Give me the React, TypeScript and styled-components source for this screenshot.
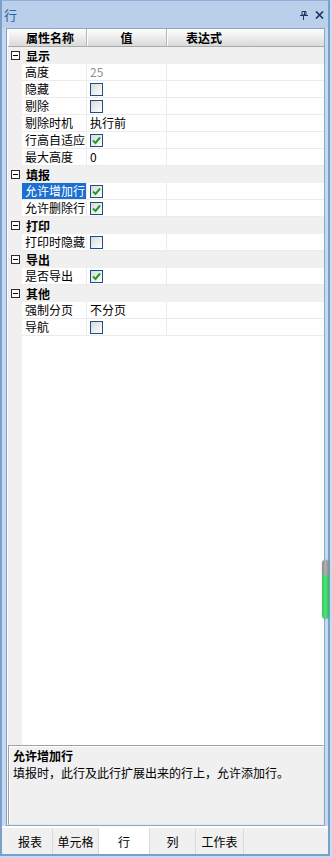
import React from "react";
import styled, { createGlobalStyle, css } from "styled-components";

const Global = createGlobalStyle`
  html, body { margin: 0; padding: 0; background: #c9dbef; }
  body { font-family: "Noto Sans CJK SC", "Noto Sans", sans-serif; font-size: 12px; color: #000; }
  * { box-sizing: border-box; }
`;

const Window = styled.div`
  position: relative;
  width: 330px;
  height: 856px;
  border: 2px solid #7b9fcd;
  border-top: 1px solid #8fb0da;
  background: #c6d9ef;
  display: flex;
  flex-direction: column;
`;

const TitleBar = styled.div`
  height: 27px;
  display: flex;
  align-items: center;
  padding: 0 4px 0 2px;
  background: #bad0ea;
`;

const Title = styled.div`
  flex: 1;
  font-size: 13px;
  line-height: 14px;
  color: #2d5ea6;
`;

const TitleButtons = styled.div`
  display: flex;
  align-items: center;
  gap: 7px;
  padding-top: 1px;
`;

const Panel = styled.div`
  flex: 1;
  margin: 0 3px 0 4px;
  border: 1px solid #8aa6cb;
  border-left-color: #7d9cc6;
  padding-left: 1px;
  background: #ffffff;
  display: flex;
  flex-direction: column;
  min-height: 0;
`;

const Grid = styled.div`
  flex: 1;
  display: flex;
  flex-direction: column;
  min-height: 0;
`;

const Header = styled.div`
  display: grid;
  grid-template-columns: 79px 80px 1fr;
  height: 18px;
  border-bottom: 1px solid #a9a9a9;
  background: linear-gradient(#fefefe, #dadada);
`;

const HeadCell = styled.div<{ $align?: string; $pad?: number }>`
  font-weight: bold;
  font-size: 12px;
  line-height: 17px;
  text-align: ${(p) => p.$align || "left"};
  padding-left: ${(p) => p.$pad ?? 0}px;
  border-right: 1px solid #b5b5b5;
  box-shadow: inset 1px 0 0 #ffffff;
  white-space: nowrap;
  &:last-child { border-right: none; }
`;

const Body = styled.div`
  flex: 1;
  background: linear-gradient(to right, #f0f0f0 14px, #ffffff 14px);
`;

const CategoryRow = styled.div`
  height: 17px;
  display: flex;
  align-items: center;
  background: #f0f0f0;
`;

const Expander = styled.div`
  position: relative;
  width: 9px;
  height: 9px;
  margin-left: 3px;
  margin-right: 6px;
  border: 1px solid #2a2a2a;
  background: #fff;
  &::after {
    content: "";
    position: absolute;
    left: 1px;
    right: 1px;
    top: 3px;
    height: 1px;
    background: #000;
  }
`;

const CategoryTitle = styled.div`
  font-weight: bold;
  font-size: 12px;
  line-height: 16px;
`;

const PropRow = styled.div`
  display: grid;
  grid-template-columns: 14px 65px 80px 1fr;
  height: 17px;
`;

const Margin = styled.div`
  background: #f0f0f0;
`;

const cellBase = css`
  border-bottom: 1px solid #ebebeb;
  font-size: 12px;
  line-height: 16px;
  white-space: nowrap;
  overflow: hidden;
  display: flex;
  align-items: center;
`;

const NameCell = styled.div<{ $selected?: boolean }>`
  ${cellBase}
  padding-left: 3px;
  border-right: 1px solid #ebebeb;
  background: ${(p) => (p.$selected ? "#1a6fd0" : "#ffffff")};
  color: ${(p) => (p.$selected ? "#ffffff" : "#000000")};
`;

const ValueCell = styled.div<{ $disabled?: boolean }>`
  ${cellBase}
  padding-left: 3px;
  border-right: 1px solid #ebebeb;
  color: ${(p) => (p.$disabled ? "#8a929c" : "#000")};
`;

const ExprCell = styled.div`
  ${cellBase}
`;

const CheckBox = styled.div`
  width: 13px;
  height: 13px;
  border: 1px solid #1d4f84;
  background: linear-gradient(135deg, #d9d9d9, #ffffff);
  display: flex;
  align-items: center;
  justify-content: center;
`;

const Description = styled.div`
  height: 80px;
  border: 1px solid #a0a0a0;
  box-shadow: inset 1px 1px 0 #ffffff;
  border-right-color: #e8e8e8;
  border-bottom-color: #e8e8e8;
  background: #f0f0f0;
  padding: 1px 4px;
`;

const DescTitle = styled.div`
  font-weight: bold;
  font-size: 12px;
  line-height: 17px;
`;

const DescText = styled.div`
  font-size: 12px;
  line-height: 17px;
`;

const TabStrip = styled.div`
  height: 28px;
  display: flex;
  align-items: flex-end;
  padding-left: 6px;
  background: #f0f0f0;
  border-top: 2px solid #ffffff;
`;

const Tab = styled.div<{ $active?: boolean; $w: number }>`
  width: ${(p) => p.$w}px;
  height: ${(p) => (p.$active ? 26 : 25)}px;
  display: flex;
  align-items: center;
  justify-content: center;
  font-size: 12px;
  line-height: 14px;
  background: ${(p) => (p.$active ? "#ffffff" : "#f0f0f0")};
  border-right: 1px solid #dadada;
  padding-top: 1px;
`;

const Scroll = styled.div`
  position: absolute;
  left: 320px;
  top: 559px;
  width: 7px;
  height: 59px;
  border-radius: 3px;
  overflow: hidden;
  display: flex;
  flex-direction: column;
  box-shadow: 0 0 2px rgba(0, 0, 0, 0.15);
`;

const ScrollTop = styled.div`
  height: 15px;
  background: linear-gradient(to right, #8a8a8a, #b0b0b0, #8a8a8a);
`;

const ScrollGreen = styled.div`
  flex: 1;
  background: linear-gradient(to right, #37c960, #4fe07a, #2fbd57);
  border-radius: 0 0 3px 3px;
`;

type Val =
  | { kind: "text"; text: string; disabled?: boolean }
  | { kind: "check"; checked: boolean };

type Prop = { name: string; value: Val; selected?: boolean };

const sections: { title: string; rows: Prop[] }[] = [
  {
    title: "显示",
    rows: [
      { name: "高度", value: { kind: "text", text: "25", disabled: true } },
      { name: "隐藏", value: { kind: "check", checked: false } },
      { name: "剔除", value: { kind: "check", checked: false } },
      { name: "剔除时机", value: { kind: "text", text: "执行前" } },
      { name: "行高自适应", value: { kind: "check", checked: true } },
      { name: "最大高度", value: { kind: "text", text: "0" } },
    ],
  },
  {
    title: "填报",
    rows: [
      { name: "允许增加行", value: { kind: "check", checked: true }, selected: true },
      { name: "允许删除行", value: { kind: "check", checked: true } },
    ],
  },
  { title: "打印", rows: [{ name: "打印时隐藏", value: { kind: "check", checked: false } }] },
  { title: "导出", rows: [{ name: "是否导出", value: { kind: "check", checked: true } }] },
  {
    title: "其他",
    rows: [
      { name: "强制分页", value: { kind: "text", text: "不分页" } },
      { name: "导航", value: { kind: "check", checked: false } },
    ],
  },
];

const tabs = [
  { label: "报表", w: 45 },
  { label: "单元格", w: 46 },
  { label: "行", w: 51, active: true },
  { label: "列", w: 46 },
  { label: "工作表", w: 48 },
];

function Check({ checked }: { checked: boolean }) {
  return (
    <CheckBox>
      {checked && (
        <svg width="11" height="11" viewBox="0 0 11 11">
          <path d="M2 5.5 L4.5 8 L9 2.5" fill="none" stroke="#1f9e2a" strokeWidth="2" />
        </svg>
      )}
    </CheckBox>
  );
}

export default function App() {
  return (
    <>
      <Global />
      <Window>
        <TitleBar>
          <Title>行</Title>
          <TitleButtons>
            <svg width="8" height="9" viewBox="0 0 8 9">
              <path d="M2 0.5 H6 V4 H2 Z" fill="none" stroke="#1b3766" strokeWidth="1" />
              <path d="M4.5 1 V4" stroke="#1b3766" strokeWidth="1" />
              <path d="M0 4.5 H8" stroke="#1b3766" strokeWidth="1" />
              <path d="M3.5 4.5 V9" stroke="#1b3766" strokeWidth="1" />
            </svg>
            <svg width="9" height="8" viewBox="0 0 9 8">
              <path d="M1 0.5 L8 7.5 M8 0.5 L1 7.5" stroke="#1b3766" strokeWidth="1.7" />
            </svg>
          </TitleButtons>
        </TitleBar>
        <Panel>
          <Grid>
            <Header>
              <HeadCell $pad={18}>属性名称</HeadCell>
              <HeadCell $align="center">值</HeadCell>
              <HeadCell $pad={19}>表达式</HeadCell>
            </Header>
            <Body>
              {sections.map((s) => (
                <React.Fragment key={s.title}>
                  <CategoryRow>
                    <Expander />
                    <CategoryTitle>{s.title}</CategoryTitle>
                  </CategoryRow>
                  {s.rows.map((r) => (
                    <PropRow key={r.name}>
                      <Margin />
                      <NameCell $selected={r.selected}>{r.name}</NameCell>
                      <ValueCell $disabled={r.value.kind === "text" && r.value.disabled}>
                        {r.value.kind === "check" ? <Check checked={r.value.checked} /> : r.value.text}
                      </ValueCell>
                      <ExprCell />
                    </PropRow>
                  ))}
                </React.Fragment>
              ))}
            </Body>
          </Grid>
          <Description>
            <DescTitle>允许增加行</DescTitle>
            <DescText>填报时，此行及此行扩展出来的行上，允许添加行。</DescText>
          </Description>
        </Panel>
        <TabStrip>
          {tabs.map((t) => (
            <Tab key={t.label} $w={t.w} $active={t.active}>
              {t.label}
            </Tab>
          ))}
        </TabStrip>
        <Scroll>
          <ScrollTop />
          <ScrollGreen />
        </Scroll>
      </Window>
    </>
  );
}
